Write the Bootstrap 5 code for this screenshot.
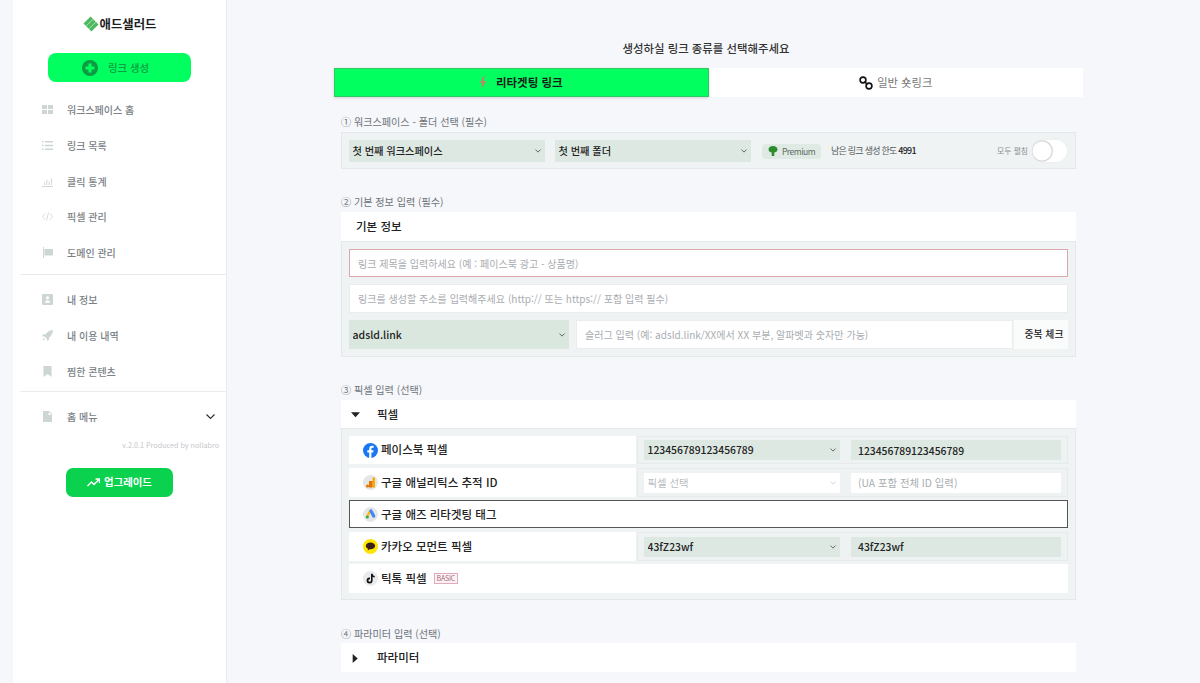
<!DOCTYPE html>
<html lang="ko">
<head>
  <meta charset="UTF-8" />
  <meta name="viewport" content="width=device-width, initial-scale=1.0"/>
  <title>애드샐러드</title>
  <link href="https://cdn.jsdelivr.net/npm/bootstrap@5.3.0/dist/css/bootstrap.min.css" rel="stylesheet" />
  <style>
    html, body { height: 683px; overflow: hidden; }
    body {
      background: #f5f7fb;
      font-family: "Noto Sans CJK KR", "Noto Sans", sans-serif;
      font-size: 11px;
      color: #212529;
    }
    .page-wrap { height: 683px; padding-left: 13px; }

    /* sidebar */
    .side-panel { width: 214px; height: 683px; background: #fff; border-right: 1px solid #e6e9f0; flex-shrink: 0; }
    .side-logo { height: 53px; padding-top: 14px; font-size: 12.4px; font-weight: 700; color: #1d1d1f; line-height: 20px; }
    .side-logo svg { margin: 2px 1px 0 0; }
    .btn-create {
      width: 143px; height: 29px; margin: 0 auto; padding: 0 8px 0 0;
      background: #00ff5f; border: 0; border-radius: 8px;
      color: #0c9c41; font-size: 10.4px; font-weight: 500; gap: 10px;
    }
    .side-menu { padding: 10px 0 0; margin: 0; list-style: none; }
    .side-menu li { height: 35.7px; padding-left: 29px; color: #7a7f85; font-weight: 500; font-size: 10px; }
    .side-menu svg { width: 11px; height: 11px; margin-right: 14px; flex-shrink: 0; }
    .side-line { height: 1px; background: #e9ebee; margin: 4px 0 6.5px 7px; }
    .side-line.second { margin: 2px 0 7px 7px; }
    .side-menu svg.menu-arrow { margin-right: 10px; }
    .side-ver { font-size: 7.2px; color: #c4c7cb; text-align: right; padding-right: 7px; margin-top: 4px; line-height: 12px; }
    .btn-upgrade {
      width: 107px; height: 29px; padding: 0; margin: 17px 0 0 53px;
      background: #0ad24f; border: 0; border-radius: 7px;
      color: #fff; font-size: 10.4px; font-weight: 700;
    }

    /* main */
    .main-area { width: 856px; padding: 0 0 0 107px; }
    .page-title { width: 749px; font-size: 11.4px; font-weight: 500; color: #333; text-align: center; height: 68px; padding: 40px 5px 0 0; line-height: 17px; margin: 0; }
    .type-tabs { width: 749px; height: 29px; background: #fff; margin-bottom: 16px; }
    .type-tab { height: 29px; flex: 1 1 50%; font-size: 11.3px; color: #777; }
    .type-tab.on { background: #00ff5f; border: 1px solid #2fc862; color: #1a1a1a; font-size: 11.5px; font-weight: 700; box-shadow: 0 1px 3px rgba(0,0,0,.15); gap: 10px; }
    .sect { width: 735px; margin-left: 7px; margin-top: 24px; }
    .sect.first { margin-top: 0; }
    .sect-label { font-size: 10.1px; color: #6f7479; line-height: 15px; height: 19px; padding-top: 1px; }
    .sect-box { background: #f0f3f3; border: 1px solid #e4e8e8; padding: 7px; }
    .sect-head { height: 29px; background: #fff; font-size: 11.5px; font-weight: 500; color: #222; padding-left: 15px; }
    .sect-head.folding { padding-top: 1px; }
    .sect-head.short { height: 28px; }
    .caret-ico { width: 9px; height: 9px; margin-right: 17px; margin-left: -5px; }

    .top-box { height: 37px; padding: 7px 8px 6px 7px; }
    .top-box .second-sel { margin-left: 10px; }
    .info-box { gap: 7px; }
    .pix-box { padding-bottom: 6px; }

    .form-select.sel-mini, .form-control.inp-mini {
      border: 0; border-radius: 0; min-height: 0; box-shadow: none;
      font-size: 10.2px; font-weight: 500; color: #222;
    }
    .form-select.sel-mini {
      width: 196px; height: 22px; padding: 0 20px 0 3.5px; background-color: #dde8e2;
      background-size: 8px 6px; background-position: right 3.5px center;
    }
    .form-select.sel-mini.tight { height: 20px; font-size: 10.35px; }
    .form-select.sel-mini.blank {
      background-color: #fff; color: #b9bcbf; font-weight: 400;
      background-image: url("data:image/svg+xml,%3csvg xmlns='http://www.w3.org/2000/svg' viewBox='0 0 16 16'%3e%3cpath fill='none' stroke='%23c4c7ca' stroke-linecap='round' stroke-linejoin='round' stroke-width='2' d='m2 5 6 6 6-6'/%3e%3c/svg%3e");
    }
    .form-control.inp-mini { height: 20px; padding: 0 7px; background: #dde8e2; font-size: 10.35px; }
    .form-control.inp-mini.blank { background: #fff; font-weight: 400; }
    .form-control.inp-big {
      height: 29px; font-size: 10.05px; border: 1px solid #eaedee; border-radius: 0;
      padding: 0 8px; min-height: 0; box-shadow: none;
    }
    .form-control.inp-big::placeholder, .form-control.inp-mini::placeholder { color: #a9adb1; }
    .form-control.inp-big.need { height: 28px; border-color: #dba6ae; }
    .form-control.inp-big.slug { width: 437px; margin-left: 7px; }
    .sel-domain.form-select {
      width: 220px; height: 29px; font-size: 10.5px; font-weight: 500; padding: 0 20px 0 3.5px;
      border: 0; border-radius: 0; background-color: #d9e7df; background-size: 8px 6px;
      background-position: right 3px center; box-shadow: none; color: #222;
    }
    .btn-dup { height: 29px; width: 54px; padding: 0 0 0 6px; background: #fafbfb; border: 0; border-radius: 0; font-size: 9.8px; font-weight: 500; color: #222; }

    .plan-pill { background: #dfeae5; border-radius: 4px; height: 15px; width: 59px; margin-left: 11px; font-size: 8.5px; color: #5d6a62; letter-spacing: -.5px; }
    .quota-txt { font-size: 9px; color: #55595c; letter-spacing: -.75px; margin-left: 10px; }
    .quota-txt b { color: #222; font-weight: 500; }
    .open-txt { font-size: 7.8px; color: #8b8f93; margin-right: 4px; }
    .switch-wrap.form-switch { padding: 0; margin: 0; min-height: 0; height: 22px; }
    .switch-wrap .form-check-input {
      width: 35px; height: 22px; margin: 0; border: 0; background-color: #fff; box-shadow: 0 0 0 1px #eef0f0;
      background-image: radial-gradient(circle at 10px 11px, #fff 9px, #cfd2d2 10px, rgba(0,0,0,.04) 11px, transparent 12px);
      background-position: 0 0; background-size: auto;
    }

    .pix-row { height: 28px; margin-bottom: 4px; }
    .pix-row.tall { height: 29px; margin-bottom: 3px; }
    .pix-row:last-child { margin-bottom: 0; }
    .pix-name { width: 287px; background: #fff; padding-left: 14px; font-size: 11.5px; font-weight: 500; color: #222; flex-shrink: 0; }
    .pix-name svg, .pix-full svg { width: 15px; height: 15px; margin-right: 3px; flex-shrink: 0; }
    .pix-vals { flex: 1; border: 1px solid #e7ebeb; background: #eef2f2; padding: 3px 6px; gap: 11px; margin-left: 1px; }
    .pix-vals > :first-child { flex-shrink: 0; }
    .pix-full { background: #fff; padding-left: 14px; font-size: 11.5px; font-weight: 500; color: #222; }
    .pix-full.boxed { border: 1px solid #555; padding: 1px 0 0 13px; }
    .basic-tag { font-size: 7px; letter-spacing: -.2px; border: 1px solid #e3a9bb; background: #fdf3f6; color: #a06a7c; padding: 0 2px; margin-left: 7px; line-height: 9px; font-weight: 400; }
    .params-sect { margin-top: 25px; }
    .params-sect .sect-label { height: 18px; }
  </style>
</head>
<body>
  <div class="page-wrap d-flex">
    <!-- Sidebar -->
    <aside class="side-panel">
      <div class="side-logo d-flex justify-content-center">
        <svg width="16" height="16" viewBox="0 0 16 16"><g fill="#4cb95f" transform="rotate(-45 8 8)"><rect x="3" y="2.4" width="10" height="3.5"/><rect x="3" y="6.25" width="10" height="3.5"/><rect x="3" y="10.1" width="10" height="3.5"/></g></svg>
        <span>애드샐러드</span>
      </div>
      <button class="btn btn-create d-flex align-items-center justify-content-center">
        <svg width="16" height="16" viewBox="0 0 16 16"><circle cx="8" cy="8" r="8" fill="#0c9c41"/><path fill="#00ff5f" d="M6.5 3.5h3v3h3v3h-3v3h-3v-3h-3v-3h3z"/></svg>
        링크 생성
      </button>
      <ul class="side-menu">
        <li class="d-flex align-items-center"><svg viewBox="0 0 11 11"><path fill="#ccd6d2" d="M0 1h5v4H0zM6 1h5v4H6zM0 6h5v4H0zM6 6h5v4H6z"/></svg>워크스페이스 홈</li>
        <li class="d-flex align-items-center"><svg viewBox="0 0 11 11"><path fill="#ccd6d2" d="M0 1h1.5v1.5H0zM3 1h8v1.5H3zM0 4.7h1.5v1.5H0zM3 4.7h8v1.5H3zM0 8.4h1.5v1.5H0zM3 8.4h8v1.5H3z"/></svg>링크 목록</li>
        <li class="d-flex align-items-center"><svg viewBox="0 0 11 11"><path fill="#ccd6d2" d="M0 10h11v1H0zM2 6.5h1V9H2zM4.3 4h1v5h-1zM6.6 5.5h1V9h-1zM8.9 2.5h1V9h-1z"/></svg>클릭 통계</li>
        <li class="d-flex align-items-center"><svg viewBox="0 0 11 11" fill="none" stroke="#ccd6d2" stroke-width=".8"><path d="M3 2.5L.5 5.5 3 8.5M8 2.5l2.5 3L8 8.5M6.5 1.5l-2 8"/></svg>픽셀 관리</li>
        <li class="d-flex align-items-center"><svg viewBox="0 0 11 11"><path fill="#ccd6d2" d="M1 0h1v11H1zM2.5 2H11v6.5H2.5z"/></svg>도메인 관리</li>
      </ul>
      <div class="side-line"></div>
      <ul class="side-menu pt-0">
        <li class="d-flex align-items-center"><svg viewBox="0 0 11 11"><path fill="#ccd6d2" fill-rule="evenodd" d="M1 0h9a1 1 0 0 1 1 1v9a1 1 0 0 1-1 1H1a1 1 0 0 1-1-1V1a1 1 0 0 1 1-1zM5.5 2.2a1.6 1.6 0 1 0 0 3.2 1.6 1.6 0 0 0 0-3.2zM2.8 8.8h5.4c0-1.8-1.2-2.6-2.7-2.6s-2.7.8-2.7 2.6z"/></svg>내 정보</li>
        <li class="d-flex align-items-center"><svg viewBox="0 0 11 11"><path fill="#ccd6d2" d="M11 0C7.5.2 5.2 2 3.6 4.2L1 4.6 0 6.2l2.6.4 2.2 2.2.4 2.2 1.6-1 .4-2.6C9.2 6 10.8 3.5 11 0zM2 8c-.8.5-1.2 1.6-1.2 2.2.7 0 1.7-.4 2.2-1.2z"/></svg>내 이용 내역</li>
        <li class="d-flex align-items-center"><svg viewBox="0 0 11 11"><path fill="#ccd6d2" d="M1.5 0h8v11L5.5 8l-4 3z"/></svg>찜한 콘텐츠</li>
      </ul>
      <div class="side-line second"></div>
      <ul class="side-menu pt-0">
        <li class="d-flex align-items-center"><svg viewBox="0 0 11 11"><path fill="#ccd6d2" fill-rule="evenodd" d="M1 0h6l3 3v8H1zM6.5 1v3h3z"/></svg>홈 메뉴
          <svg viewBox="0 0 11 11" fill="none" stroke="#333" stroke-width="1.2" class="menu-arrow ms-auto"><path d="M1.5 3.5l4 4 4-4"/></svg>
        </li>
      </ul>
      <div class="side-ver">v.2.0.1 Produced by nollabro</div>
      <button class="btn btn-upgrade d-flex align-items-center justify-content-center gap-1">
        <svg width="13" height="9" viewBox="0 0 13 9" fill="none" stroke="#fff" stroke-width="1.4"><path d="M.5 8l4-4 2.5 2.5L12 1.5M8.5 1h4v4"/></svg>
        업그레이드
      </button>
    </aside>

    <!-- Main -->
    <main class="main-area">
      <h1 class="page-title">생성하실 링크 종류를 선택해주세요</h1>

      <div class="type-tabs d-flex">
        <div class="type-tab on d-flex align-items-center justify-content-center">
          <svg width="6" height="13" viewBox="0 0 6 13"><path fill="#c9806b" d="M3.6 0L0 7h2.2L1.4 13 6 5H3.4L4.8 0z"/></svg>
          리타겟팅 링크
        </div>
        <div class="type-tab d-flex align-items-center justify-content-center gap-1">
          <svg width="14" height="14" viewBox="0 0 14 14" fill="none" stroke="#111" stroke-width="1.6"><circle cx="4" cy="4" r="2.9"/><circle cx="10" cy="10" r="2.9"/><path d="M5.5 5.5l3 3"/></svg>
          일반 숏링크
        </div>
      </div>

      <section class="sect first">
        <div class="sect-label">① 워크스페이스 - 폴더 선택 (필수)</div>
        <div class="sect-box top-box d-flex align-items-center">
          <select class="form-select sel-mini"><option>첫 번째 워크스페이스</option></select>
          <select class="form-select sel-mini second-sel"><option>첫 번째 폴더</option></select>
          <span class="plan-pill d-inline-flex align-items-center justify-content-center gap-1">
            <svg width="10" height="10" viewBox="0 0 10 10"><path fill="#2e8b2e" d="M5 0C2.5 0 .5 1.4.5 3.4S2.5 6.4 3.7 6.4V10h2.6V6.4C7.5 6.4 9.5 5.4 9.5 3.4S7.5 0 5 0z"/></svg>
            Premium
          </span>
          <span class="quota-txt">남은 링크 생성 한도 <b>4991</b></span>
          <span class="open-txt ms-auto">모두 펼침</span>
          <div class="form-check form-switch switch-wrap"><input class="form-check-input" type="checkbox" role="switch"></div>
        </div>
      </section>

      <section class="sect">
        <div class="sect-label">② 기본 정보 입력 (필수)</div>
        <div class="sect-head d-flex align-items-center">기본 정보</div>
        <div class="sect-box info-box d-flex flex-column">
          <input class="form-control inp-big need" placeholder="링크 제목을 입력하세요 (예 : 페이스북 광고 - 상품명)">
          <input class="form-control inp-big" placeholder="링크를 생성할 주소를 입력해주세요 (http:// 또는 https:// 포함 입력 필수)">
          <div class="d-flex">
            <select class="form-select sel-domain"><option>adsld.link</option></select>
            <input class="form-control inp-big slug" placeholder="슬러그 입력 (예: adsld.link/XX에서 XX 부분, 알파벳과 숫자만 가능)">
            <button class="btn btn-dup ms-auto">중복 체크</button>
          </div>
        </div>
      </section>

      <section class="sect">
        <div class="sect-label">③ 픽셀 입력 (선택)</div>
        <div class="sect-head short folding d-flex align-items-center">
          <svg class="caret-ico" viewBox="0 0 8 8"><path fill="#222" d="M0 2h8L4 6.5z"/></svg>픽셀
        </div>
        <div class="sect-box pix-box">
          <div class="pix-row d-flex">
            <div class="pix-name d-flex align-items-center">
              <svg viewBox="0 0 15 15"><circle cx="7.5" cy="7.5" r="7.5" fill="#1877f2"/><path fill="#fff" d="M8.4 15V9.5h1.8l.35-2.2H8.4V6c0-.7.3-1.2 1.3-1.2h1V2.9c-.4-.1-1-.15-1.6-.15-1.8 0-2.9 1.05-2.9 3V7.3H4.3v2.2h1.9V15z"/></svg>
              페이스북 픽셀
            </div>
            <div class="pix-vals d-flex align-items-center">
              <select class="form-select sel-mini tight"><option>123456789123456789</option></select>
              <input class="form-control inp-mini" value="123456789123456789">
            </div>
          </div>
          <div class="pix-row tall d-flex">
            <div class="pix-name d-flex align-items-center">
              <svg viewBox="0 0 15 15"><circle cx="7.5" cy="7.5" r="7.5" fill="#e4e6e8"/><path fill="#f9ab00" d="M9.5 2.5h2.5v10H9.5z"/><path fill="#e37400" d="M6 6h3.5v6.5H6z"/><circle cx="4.5" cy="11" r="1.6" fill="#e37400"/></svg>
              구글 애널리틱스 추적 ID
            </div>
            <div class="pix-vals d-flex align-items-center">
              <select class="form-select sel-mini tight blank"><option>픽셀 선택</option></select>
              <input class="form-control inp-mini blank" placeholder="(UA 포함 전체 ID 입력)">
            </div>
          </div>
          <div class="pix-row pix-full boxed d-flex align-items-center">
            <svg viewBox="0 0 15 15"><circle cx="7.5" cy="7.5" r="7.5" fill="#e4e6e8"/><path fill="#fbbc04" d="M6.2 3.2L3 9l2 1.2 3.2-5.8z"/><path fill="#4285f4" d="M6.4 4.4a1.6 1.6 0 0 1 2.8-1.5l3 5.5a1.6 1.6 0 0 1-2.8 1.5z"/><circle cx="4.3" cy="10" r="1.6" fill="#34a853"/></svg>
            구글 애즈 리타겟팅 태그
          </div>
          <div class="pix-row tall d-flex">
            <div class="pix-name d-flex align-items-center">
              <svg viewBox="0 0 15 15"><circle cx="7.5" cy="7.5" r="7.5" fill="#fee500"/><path fill="#3a1d1d" d="M7.5 3.5c-2.6 0-4.6 1.5-4.6 3.4 0 1.2.9 2.3 2.2 2.9l-.5 1.8 2.1-1.4h.8c2.5 0 4.6-1.5 4.6-3.3S10 3.5 7.5 3.5z"/></svg>
              카카오 모먼트 픽셀
            </div>
            <div class="pix-vals d-flex align-items-center">
              <select class="form-select sel-mini tight"><option>43fZ23wf</option></select>
              <input class="form-control inp-mini" value="43fZ23wf">
            </div>
          </div>
          <div class="pix-row tall pix-full d-flex align-items-center">
            <svg viewBox="0 0 15 15"><circle cx="7.5" cy="7.5" r="7.5" fill="#e9eaec"/><path fill="#111" d="M8 2.8h1.6c.1 1.2.9 2 2.1 2.1v1.6c-.8 0-1.5-.2-2.1-.7v3.7a3 3 0 1 1-3-3l.4.03v1.7a1.3 1.3 0 1 0 1 1.27z"/></svg>
            틱톡 픽셀
            <span class="basic-tag">BASIC</span>
          </div>
        </div>
      </section>

      <section class="sect params-sect">
        <div class="sect-label">④ 파라미터 입력 (선택)</div>
        <div class="sect-head folding d-flex align-items-center">
          <svg class="caret-ico" viewBox="0 0 8 8"><path fill="#222" d="M1.5 0v8L6 4z"/></svg>파라미터
        </div>
      </section>
    </main>
  </div>
  <script src="https://cdn.jsdelivr.net/npm/bootstrap@5.3.0/dist/js/bootstrap.bundle.min.js"></script>
</body>
</html>
